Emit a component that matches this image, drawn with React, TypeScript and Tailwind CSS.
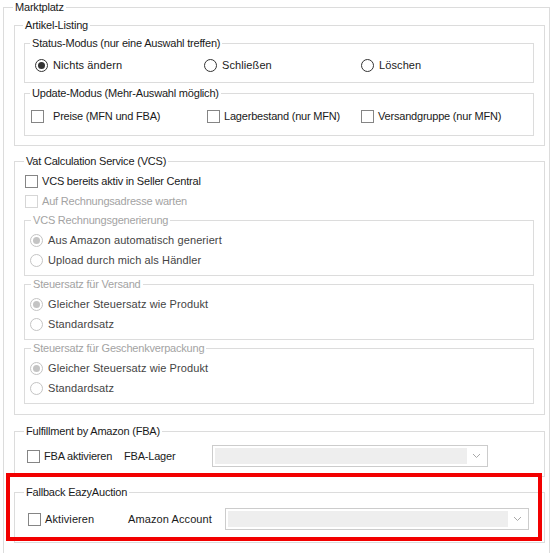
import React from "react";

const SEGOE = "font-['Liberation_Sans',Arial,sans-serif] text-[11px] tracking-[-0.2px]";
const TAHOMA = "font-['Liberation_Sans',Arial,sans-serif] text-[11px] tracking-[0.1px]";

interface GroupProps {
  title: string;
  indent: number;
  disabled?: boolean;
  className?: string;
  bodyClass?: string;
  children?: React.ReactNode;
}

function GroupBox({ title, indent, disabled, className = "", bodyClass = "", children }: GroupProps) {
  return (
    <fieldset className={`border border-[#dcdcdc] p-0 m-0 min-w-0 ${className}`}>
      <legend
        className={`px-[2px] h-[14px] leading-[14px] ${SEGOE} ${disabled ? "text-[#a3a3a3]" : "text-[#1a1a1a]"}`}
        style={{ marginLeft: indent }}
      >
        {title}
      </legend>
      <div className={bodyClass}>{children}</div>
    </fieldset>
  );
}

function Radio({ label, checked, disabled }: { label: string; checked?: boolean; disabled?: boolean }) {
  return (
    <div className="flex items-center h-[20px]">
      <span
        className={`w-[13px] h-[13px] rounded-full border flex items-center justify-center bg-white ${
          disabled ? "border-[#c4c4c4]" : "border-[#333333]"
        }`}
      >
        {checked && (
          <span className={`w-[7px] h-[7px] rounded-full ${disabled ? "bg-[#c4c4c4]" : "bg-[#333333]"}`} />
        )}
      </span>
      <span className={`ml-[5px] ${TAHOMA} ${disabled ? "text-[#444444]" : "text-[#1a1a1a]"}`}>{label}</span>
    </div>
  );
}

function Check({ label, disabled, gap = 5, font = SEGOE }: { label: string; disabled?: boolean; gap?: number; font?: string }) {
  return (
    <div className="flex items-center h-[20px]">
      <span
        className={`w-[13px] h-[13px] border bg-white ${disabled ? "border-[#d6d6d6]" : "border-[#858585]"}`}
      />
      <span
        className={`${font} ${disabled ? "text-[#a3a3a3]" : "text-[#1a1a1a]"}`}
        style={{ marginLeft: gap }}
      >
        {label}
      </span>
    </div>
  );
}

function Combo({ className = "" }: { className?: string }) {
  return (
    <div className={`h-[22px] border border-[#cccccc] bg-white flex p-[2px] ${className}`}>
      <div className="flex-1 bg-[#eeeeee]" />
      <div className="w-[18px] flex items-center justify-center">
        <svg width="9" height="6" viewBox="0 0 9 6">
          <path d="M1 1 L4.5 4.5 L8 1" fill="none" stroke="#a8a8a8" strokeWidth="1" />
        </svg>
      </div>
    </div>
  );
}

export default function App() {
  return (
    <div className="relative w-[554px] h-[553px] bg-white overflow-hidden pl-[3px]">
      <GroupBox title="Marktplatz" indent={9} className="w-[547px]" bodyClass="pl-[10px] pr-[4px] pb-[30px]">
        {/* Artikel-Listing */}
        <GroupBox title="Artikel-Listing" indent={8} className="mt-[4px]" bodyClass="pl-[9px] pr-[10px] pb-[9px]">
          <GroupBox title="Status-Modus (nur eine Auswahl treffen)" indent={5} className="mt-[4px]" bodyClass="pl-[10px] pt-[5px] pb-[7px]">
            <div className="flex">
              <div className="w-[169px]">
                <Radio label="Nichts ändern" checked />
              </div>
              <div className="w-[157px]">
                <Radio label="Schließen" />
              </div>
              <Radio label="Löschen" />
            </div>
          </GroupBox>
          <GroupBox title="Update-Modus (Mehr-Auswahl möglich)" indent={5} className="mt-[3px]" bodyClass="pl-[6px] pt-[6px] pb-[9px]">
            <div className="flex">
              <div className="w-[176px]">
                <Check label="Preise (MFN und FBA)" gap={9} />
              </div>
              <div className="w-[154px]">
                <Check label="Lagerbestand (nur MFN)" gap={4} />
              </div>
              <Check label="Versandgruppe (nur MFN)" gap={4} />
            </div>
          </GroupBox>
        </GroupBox>

        {/* VCS */}
        <GroupBox title="Vat Calculation Service (VCS)" indent={9} className="mt-[8px]" bodyClass="pl-[9px] pr-[10px] pb-[10px]">
          <div className="pl-[1px] pt-[3px]">
            <Check label="VCS bereits aktiv in Seller Central" gap={4} />
            <Check label="Auf Rechnungsadresse warten" gap={4} disabled />
          </div>
          <GroupBox title="VCS Rechnungsgenerierung" indent={6} disabled className="mt-[2px]" bodyClass="pl-[5px] pt-[3px] pb-[5px]">
            <Radio label="Aus Amazon automatisch generiert" checked disabled />
            <Radio label="Upload durch mich als Händler" disabled />
          </GroupBox>
          <GroupBox title="Steuersatz für Versand" indent={6} disabled className="mt-[1px]" bodyClass="pl-[5px] pt-[3px] pb-[5px]">
            <Radio label="Gleicher Steuersatz wie Produkt" checked disabled />
            <Radio label="Standardsatz" disabled />
          </GroupBox>
          <GroupBox title="Steuersatz für Geschenkverpackung" indent={6} disabled className="mt-[1px]" bodyClass="pl-[5px] pt-[3px] pb-[5px]">
            <Radio label="Gleicher Steuersatz wie Produkt" checked disabled />
            <Radio label="Standardsatz" disabled />
          </GroupBox>
        </GroupBox>

        {/* FBA */}
        <GroupBox title="Fulfillment by Amazon (FBA)" indent={9} className="mt-[9px]" bodyClass="pl-[12px] pt-[7px] pb-[9px]">
          <div className="flex items-center h-[22px]">
            <div className="w-[97px]">
              <Check label="FBA aktivieren" gap={4} />
            </div>
            <span className={`w-[88px] ${SEGOE} text-[#1a1a1a]`}>FBA-Lager</span>
            <Combo className="w-[276px]" />
          </div>
        </GroupBox>

        {/* Fallback */}
        <GroupBox title="Fallback EazyAuction" indent={9} className="mt-[8px]" bodyClass="pl-[13px] pt-[9px] pb-[12px]">
          <div className="flex items-center h-[22px]">
            <div className="w-[100px]">
              <Check label="Aktivieren" gap={4} font={TAHOMA} />
            </div>
            <span className={`w-[97px] ${TAHOMA} text-[#1a1a1a]`}>Amazon Account</span>
            <Combo className="w-[304px]" />
          </div>
        </GroupBox>
      </GroupBox>

      {/* red highlight */}
      <div className="absolute left-[6px] top-[473px] w-[536px] h-[68px] border-4 border-[#f20000]" />
    </div>
  );
}
